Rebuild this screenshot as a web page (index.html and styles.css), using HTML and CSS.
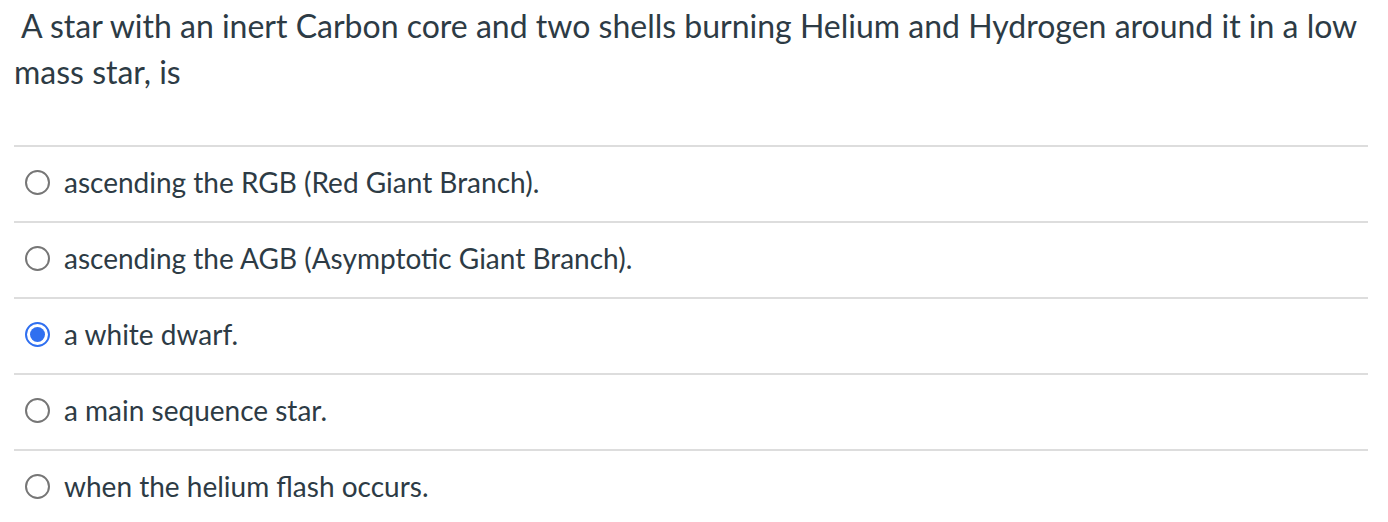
FILE: index.html
```html
<!DOCTYPE html>
<html lang="en">
<head>
<meta charset="utf-8">
<title>Quiz question</title>
<link rel="stylesheet" href="styles.css">
</head>
<body>
<div class="quiz">
  <div class="question">&nbsp;A star with an inert Carbon core and two shells burning Helium and Hydrogen around it in a low mass star, is</div>
  <div class="answers">
    <label class="answer"><span class="radio"></span><span class="label">ascending the RGB (Red Giant Branch).</span></label>
    <label class="answer"><span class="radio"></span><span class="label">ascending the AGB (Asymptotic Giant Branch).</span></label>
    <label class="answer"><span class="radio checked"></span><span class="label">a white dwarf.</span></label>
    <label class="answer"><span class="radio"></span><span class="label">a main sequence star.</span></label>
    <label class="answer"><span class="radio"></span><span class="label">when the helium flash occurs.</span></label>
  </div>
</div>
</body>
</html>
```
FILE: styles.css
```css
html, body {
  margin: 0;
  padding: 0;
  background: #ffffff;
}
body {
  font-family: Lato, "Liberation Sans", sans-serif;
  color: #2d3b45;
}
.quiz {
  padding: 0 20px 0 14px;
}
.question {
  box-sizing: border-box;
  font-size: 32px;
  line-height: 46px;
  padding-top: 3px;
  height: 145px;
}
.answers {
  display: flex;
  flex-direction: column;
}
.answer {
  box-sizing: border-box;
  display: flex;
  align-items: center;
  gap: 14px;
  height: 76px;
  border-top: 2px solid #dddddd;
  padding: 0 0 4px 11px;
  font-size: 28px;
}
.radio {
  box-sizing: border-box;
  width: 25px;
  height: 25px;
  border: 2px solid #767676;
  border-radius: 50%;
  flex: none;
  display: flex;
  align-items: center;
  justify-content: center;
}
.radio.checked {
  border-color: #2f6ff0;
}
.radio.checked::after {
  content: "";
  width: 15px;
  height: 15px;
  border-radius: 50%;
  background: #2f6ff0;
}
```
